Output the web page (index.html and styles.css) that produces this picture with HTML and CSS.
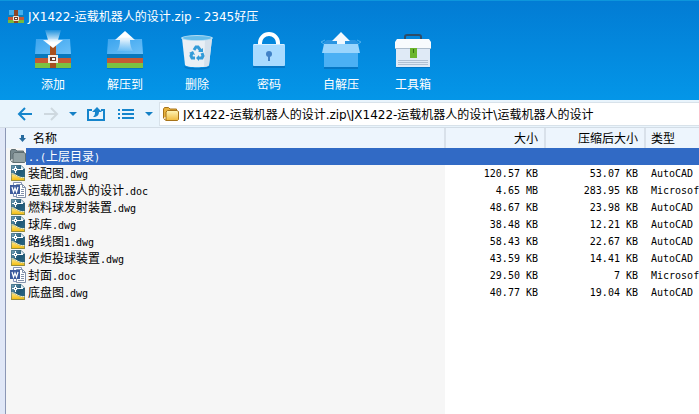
FILE: index.html
```html
<!DOCTYPE html>
<html lang="zh-CN">
<head>
  <meta charset="UTF-8" />
  <meta name="viewport" content="width=device-width, initial-scale=1.0"/>
  <title>JX1422-运载机器人的设计.zip - 2345好压</title>
  <link rel="stylesheet" href="styles.css">
</head>
<body>
  <!-- shared icons -->
  <svg class="sprite" aria-hidden="true">
    <defs>
      <linearGradient id="down" x1="0" y1="0" x2="0" y2="1">
        <stop offset="0" stop-color="#fff" stop-opacity="0.1"/>
        <stop offset="0.7" stop-color="#fff"/>
      </linearGradient>
      <linearGradient id="up" x1="0" y1="0" x2="0" y2="1">
        <stop offset="0.3" stop-color="#fff"/>
        <stop offset="1" stop-color="#fff" stop-opacity="0.1"/>
      </linearGradient>
      <linearGradient id="sky" x1="0" y1="0" x2="1" y2="1">
        <stop offset="0" stop-color="#3ba4ee"/>
        <stop offset="1" stop-color="#6cc0f8"/>
      </linearGradient>
      <linearGradient id="gold" x1="0" y1="0" x2="0" y2="1">
        <stop offset="0" stop-color="#fff6b8"/>
        <stop offset="1" stop-color="#f0b93c"/>
      </linearGradient>
      <linearGradient id="yellow" x1="0" y1="0" x2="0" y2="1">
        <stop offset="0" stop-color="#fbe58a"/>
        <stop offset="1" stop-color="#f5b800"/>
      </linearGradient>
      <linearGradient id="teal" x1="0" y1="0" x2="1" y2="1">
        <stop offset="0" stop-color="#7fa9bf"/>
        <stop offset="0.5" stop-color="#1d5675"/>
        <stop offset="1" stop-color="#2f6d8a"/>
      </linearGradient>
    </defs>
    <symbol id="box" viewBox="0 0 40 40">
      <path d="M2 37h36v2H2z" fill="#0560a8" opacity="0.5"/>
      <path d="M3 9h34l1 15H2z" fill="url(#sky)"/>
      <path d="M2 24h36v4H2z" fill="#0878bd"/>
      <path d="M2 28h36v5H2z" fill="#c65a35"/>
      <path d="M2 33h36v5H2z" fill="#7cc242"/>
    </symbol>
    <symbol id="dwg" viewBox="0 0 16 16">
      <path d="M1 0h10l4 4v12H1z" fill="url(#teal)"/>
      <path d="M1 9c5 0 7 5 14 4v3H1z" fill="url(#yellow)"/>
      <path d="M1 8.500c5 0 7 5 14 4" fill="none" stroke="#fff3bb"/>
      <path d="M11 0v4h4z" fill="#e3eef4"/>
      <path d="M5.500 1v2M5.500 6v2M2 4.500h2M7 4.500h6" stroke="#fff" fill="none"/>
      <rect x="4.500" y="3.500" width="2" height="2" fill="#1d5675" stroke="#fff"/>
      <path d="M1.500 15.500V.5H11l3.500 3.500v11.500z" fill="none" stroke="#34606f" stroke-opacity="0.5"/>
    </symbol>
    <symbol id="doc" viewBox="0 0 16 16">
      <path d="M3.500 .5h8v14h-8z" fill="#fff" stroke="#8292b8"/>
      <path d="M6.500 2.500h6l3 3v10h-9z" fill="#fff" stroke="#8190aa"/>
      <path d="M12.500 2.500v3h3M11 7.500h3M11 9.500h3M11 11.500h3M8 13.500h6" fill="none" stroke="#8190aa"/>
      <path d="M0 3h10v9H0z" fill="#3c5a9c"/>
      <path d="M2 5l1.500 5L5 6l1.500 4L8 5" fill="none" stroke="#fff" stroke-width="1.200"/>
    </symbol>
    <symbol id="caret" viewBox="0 0 8 4">
      <path d="M0 0h8L4 4z" fill="#1480c5"/>
    </symbol>
  </svg>

  <header class="top">
    <div class="titlebar">
      <svg class="logo" viewBox="0 0 16 16">
        <path d="M1 1h14v6H1z" fill="#41b0ef"/>
        <path d="M0 6h16v3H0z" fill="#0b7fba"/>
        <path d="M0 8h16v3H0z" fill="#c75836"/>
        <path d="M0 11h16v3H0z" fill="#79b93c"/>
        <path d="M6 1h4v13H6z" fill="#8c4627"/>
        <path d="M5.500 7.500h5v4h-5z" fill="#6b4030" stroke="#f5e7da"/>
        <path d="M7 9.500h2" stroke="#fff"/>
      </svg>
      <h1>JX1422-运载机器人的设计.zip - 2345好压</h1>
    </div>
    <div class="tools">
      <button type="button">
        <svg viewBox="0 0 40 40">
          <use href="#box"/>
          <path d="M17 14h6v24h-6z" fill="#a8501f"/>
          <path d="M16 26h8v6h-8z" fill="#6c3b28" stroke="#f7ebe4" stroke-width="2"/>
          <path d="M19 29h3" stroke="#fff" stroke-width="2"/>
          <path d="M12 0h16l-3 10h5L20 18 10 10h5z" fill="url(#down)"/>
        </svg>
        <span>添加</span>
      </button>
      <button type="button">
        <svg viewBox="0 0 40 40">
          <use href="#box"/>
          <path d="M20 1l10 9h-5c0 5 1 8 3 11H12c2-3 3-6 3-11h-5z" fill="url(#up)"/>
        </svg>
        <span>解压到</span>
      </button>
      <button type="button">
        <svg viewBox="0 0 40 40">
          <path d="M7 36c5 3 21 3 26 0l-1 2c-6 2-18 2-24 0z" fill="#0560a8" opacity="0.5"/>
          <path d="M5 8h30l-3 27c-1 3-23 3-24 0z" fill="#e9eff5"/>
          <path d="M28 9h7l-3 26c0 1-3 2-5 2z" fill="#d5e0eb"/>
          <ellipse cx="20" cy="8" rx="16" ry="3" fill="#b5dcf2"/>
          <ellipse cx="20" cy="8" rx="14" ry="2" fill="#65bdeb"/>
          <g fill="none" stroke="#329bd8" stroke-width="3">
            <path d="M17 20l2-3h2l3 4"/>
            <path d="M15 23l-1 3 1 2h3"/>
            <path d="M22 28h3l1-2-1-3"/>
          </g>
          <path d="M21 22h5v-4zM12 23l4-2 2 4zM22 25v6l-3-3z" fill="#329bd8"/>
        </svg>
        <span>删除</span>
      </button>
      <button type="button">
        <svg viewBox="0 0 40 40">
          <path d="M4 36h32v2H4z" fill="#0560a8" opacity="0.5"/>
          <path d="M11 16v-3a9 9 0 0 1 18 0v3" fill="none" stroke="#fff" stroke-width="4"/>
          <rect x="4" y="14" width="32" height="22" rx="1" fill="#a9dbff"/>
          <path d="M5 14.500h30" stroke="#d6eeff"/>
          <circle cx="20" cy="24" r="3" fill="#4182c7"/>
          <path d="M20 24v7" stroke="#4182c7" stroke-width="2"/>
        </svg>
        <span>密码</span>
      </button>
      <button type="button">
        <svg viewBox="0 0 40 40">
          <path d="M3 37h34v2H3z" fill="#0560a8" opacity="0.5"/>
          <path d="M3 12l3-2h28l3 2v4H3z" fill="#2a95e2"/>
          <path d="M20 2l9 9h-5v6h-8v-6h-5z" fill="#f1f8fe"/>
          <path d="M3 20h34v17H3z" fill="#4bb0f4"/>
          <path d="M3 14h34l2 9H1z" fill="#9ad5fd"/>
          <path d="M3 14L0 12l4-2M37 14l3-2-4-2" fill="none" stroke="#4fb1ee"/>
        </svg>
        <span>自解压</span>
      </button>
      <button type="button">
        <svg viewBox="0 0 40 40">
          <path d="M3 36h34v2H3z" fill="#0560a8" opacity="0.5"/>
          <path d="M12 10V7q0-2 2-2h12q2 0 2 2v3" fill="none" stroke="#2e4d68" stroke-width="2"/>
          <path d="M3 17h34v20H3z" fill="#dfeaf6"/>
          <path d="M4 9h32l2 3v6H2v-6z" fill="#f8fbfd"/>
          <path d="M2 18.500h36" stroke="#aebdcc"/>
          <path d="M5 30.500h30M5 32.500h30M5 34.500h30" stroke="#b1c0d2"/>
          <path d="M17 18h7v10h-7z" fill="#6ab52d"/>
          <path d="M20.500 19v4" stroke="#356f13"/>
        </svg>
        <span>工具箱</span>
      </button>
    </div>
  </header>

  <nav class="navbar">
    <button type="button" class="arrow" aria-label="后退">
      <svg viewBox="0 0 16 14"><path d="M8 1L2 7l6 6M2 7h13" fill="none" stroke="#1585cc" stroke-width="2"/></svg>
    </button>
    <button type="button" class="arrow" aria-label="前进" disabled>
      <svg viewBox="0 0 16 14"><path d="M8 1l6 6-6 6M14 7H1" fill="none" stroke="#ced8df" stroke-width="2"/></svg>
    </button>
    <button type="button" class="drop" aria-label="历史记录"><svg viewBox="0 0 8 4"><use href="#caret"/></svg></button>
    <button type="button" class="share" aria-label="向上">
      <svg viewBox="0 0 18 14">
        <path d="M5 3H1v10h16V3h-3" fill="none" stroke="#1585cc" stroke-width="2"/>
        <path d="M10 0l5 5h-3c0 3-2 5-6 5 2-2 2-3 2-5H5z" fill="#1585cc"/>
      </svg>
    </button>
    <button type="button" class="view" aria-label="查看">
      <svg viewBox="0 0 16 14"><path d="M0 3h2m2 0h12M0 7h2m2 0h12M0 11h2m2 0h12" fill="none" stroke="#1585cc" stroke-width="2"/></svg>
    </button>
    <button type="button" class="drop" aria-label="查看方式"><svg viewBox="0 0 8 4"><use href="#caret"/></svg></button>
    <label class="address">
      <svg viewBox="0 0 16 14">
        <path d="M.5 11V2l1-1.500h4L7 2h6.500v2" fill="#e8b23c" stroke="#a67319"/>
        <path d="M.5 11.500L3 13.500h11.500l1-1V4.500L14 3.500H4.500L3 5v8" fill="url(#gold)" stroke="#a67319"/>
      </svg>
      <input type="text" aria-label="路径" value="JX1422-运载机器人的设计.zip\JX1422-运载机器人的设计\运载机器人的设计">
    </label>
  </nav>

  <main class="files">
    <table>
      <colgroup>
        <col class="col-name">
        <col class="col-size">
        <col class="col-size">
        <col>
      </colgroup>
      <thead>
        <tr>
          <th class="sort"><svg viewBox="0 0 8 8"><path d="M3 0h3v3h2L4.500 7 1 3h2z" fill="#276b9f"/></svg>名称</th>
          <th class="num">大小</th>
          <th class="num">压缩后大小</th>
          <th>类型</th>
        </tr>
      </thead>
      <tbody>
        <tr class="selected">
          <td>
            <div class="name">
              <svg viewBox="0 0 16 16">
                <path d="M.5 12V3l1-1.500h4L7 3h6.500v2" fill="#77888d" stroke="#5e6d70"/>
                <path d="M.5 12.500L3 14.500h11.500l1-1V5.500L14 4.500H4.500L3 6v8" fill="#93a2a4" stroke="#5e6d70"/>
              </svg>
              <span><i>..(</i>上层目录<i>)</i></span>
            </div>
          </td>
          <td></td>
          <td></td>
          <td></td>
        </tr>
        <tr>
          <td><div class="name"><svg><use href="#dwg"/></svg><span>装配图<i>.dwg</i></span></div></td>
          <td class="num">120.57 KB</td>
          <td class="num">53.07 KB</td>
          <td>AutoCAD</td>
        </tr>
        <tr>
          <td><div class="name"><svg><use href="#doc"/></svg><span>运载机器人的设计<i>.doc</i></span></div></td>
          <td class="num">4.65 MB</td>
          <td class="num">283.95 KB</td>
          <td>Microsoft</td>
        </tr>
        <tr>
          <td><div class="name"><svg><use href="#dwg"/></svg><span>燃料球发射装置<i>.dwg</i></span></div></td>
          <td class="num">48.67 KB</td>
          <td class="num">23.98 KB</td>
          <td>AutoCAD</td>
        </tr>
        <tr>
          <td><div class="name"><svg><use href="#dwg"/></svg><span>球库<i>.dwg</i></span></div></td>
          <td class="num">38.48 KB</td>
          <td class="num">12.21 KB</td>
          <td>AutoCAD</td>
        </tr>
        <tr>
          <td><div class="name"><svg><use href="#dwg"/></svg><span>路线图<i>1.dwg</i></span></div></td>
          <td class="num">58.43 KB</td>
          <td class="num">22.67 KB</td>
          <td>AutoCAD</td>
        </tr>
        <tr>
          <td><div class="name"><svg><use href="#dwg"/></svg><span>火炬投球装置<i>.dwg</i></span></div></td>
          <td class="num">43.59 KB</td>
          <td class="num">14.41 KB</td>
          <td>AutoCAD</td>
        </tr>
        <tr>
          <td><div class="name"><svg><use href="#doc"/></svg><span>封面<i>.doc</i></span></div></td>
          <td class="num">29.50 KB</td>
          <td class="num">7 KB</td>
          <td>Microsoft</td>
        </tr>
        <tr>
          <td><div class="name"><svg><use href="#dwg"/></svg><span>底盘图<i>.dwg</i></span></div></td>
          <td class="num">40.77 KB</td>
          <td class="num">19.04 KB</td>
          <td>AutoCAD</td>
        </tr>
      </tbody>
    </table>
  </main>
</body>
</html>
```

FILE: styles.css
```css
* {
  box-sizing: border-box;
}

html, body {
  height: 100%;
  margin: 0;
}

body {
  display: flex;
  flex-direction: column;
  overflow: hidden;
  font-family: "Noto Sans CJK SC", sans-serif;
  font-size: 12px;
  color: #000;
  background-color: #fff;
}

svg {
  display: block;
  flex: none;
}

button {
  padding: 0;
  border: none;
  background: none;
  font: inherit;
  cursor: pointer;
}

.sprite {
  position: absolute;
  width: 0;
  height: 0;
}

/* blue header */
.top {
  flex: none;
  height: 100px;
  padding-top: 7px;
  border-top: 1px solid #0d96dc;
  background-image: linear-gradient(#027cd4, #0496e8);
  color: #fff;
}

.titlebar {
  display: flex;
  align-items: center;
  gap: 4px;
  height: 18px;
  padding-left: 8px;
}

.logo {
  width: 16px;
  height: 16px;
}

h1 {
  margin: 0;
  font-family: "DejaVu Sans", "Noto Sans CJK SC", sans-serif;
  font-size: 12px;
  font-weight: normal;
  line-height: 18px;
  white-space: nowrap;
}

.tools {
  display: flex;
  padding: 4px 0 0 17px;
}

.tools button {
  display: flex;
  flex-direction: column;
  align-items: center;
  gap: 5px;
  width: 72px;
  color: #fff;
  line-height: 18px;
}

.tools svg {
  width: 40px;
  height: 40px;
}

/* navigation row */
.navbar {
  display: flex;
  flex: none;
  align-items: center;
  height: 28px;
  padding-left: 17px;
  border-bottom: 1px solid #d3dde6;
  background-color: #e9f4fc;
}

.arrow svg {
  width: 16px;
  height: 14px;
}

.arrow {
  margin-right: 10px;
}

.drop svg {
  width: 8px;
  height: 4px;
}

.drop {
  margin-right: 6px;
}

.share svg {
  width: 18px;
  height: 14px;
}

.share {
  margin: 0 13px 0 4px;
}

.view svg {
  width: 16px;
  height: 14px;
}

.view {
  margin-right: 11px;
}

.address {
  display: flex;
  flex: 1;
  align-items: center;
  gap: 4px;
  height: 24px;
  padding-left: 3px;
  border: 1px solid #d8e2ea;
  border-right: none;
  background-color: #fff;
}

.address svg {
  width: 16px;
  height: 14px;
}

.address input {
  flex: 1;
  min-width: 0;
  padding: 0;
  border: none;
  outline: none;
  font-family: "DejaVu Sans", "Noto Sans CJK SC", sans-serif;
  font-size: 12px;
  color: #000;
}

/* file list */
.files {
  flex: 1;
  overflow: hidden;
  border-left: 5px solid #e0e7f7;
  background-image: linear-gradient(to right, #8c97b5 1px, #f6f6f6 1px, #f6f6f6 440px, #fff 440px);
  padding-left: 1px;
}

table {
  width: 100%;
  table-layout: fixed;
  border-collapse: separate;
  border-spacing: 0;
}

.col-name {
  width: 440px;
}

.col-size {
  width: 100px;
}

th {
  height: 20px;
  padding: 0 6px 0 5px;
  border-right: 2px solid #d9e1ea;
  background-color: #edf5fd;
  font-weight: normal;
  line-height: 18px;
  text-align: left;
  white-space: nowrap;
}

th:last-child {
  border-right: none;
}

.sort {
  padding-left: 12px;
}

.sort svg {
  display: inline-block;
  width: 8px;
  height: 8px;
  margin-right: 7px;
}

td {
  height: 17px;
  padding: 0 8px 0 5px;
  overflow: hidden;
  font-family: "DejaVu Sans Mono", monospace;
  font-size: 10px;
  line-height: 17px;
  white-space: nowrap;
}

td:first-child {
  padding: 0;
  font-family: "Noto Sans CJK SC", sans-serif;
  font-size: 12px;
}

.num {
  text-align: right;
}

.name {
  display: flex;
  height: 17px;
  line-height: 15px;
}

.name svg {
  width: 16px;
  height: 16px;
  margin-left: 4px;
}

.name span {
  flex: 1;
  padding-left: 2px;
}

.name i {
  font-family: "DejaVu Sans Mono", monospace;
  font-size: 10px;
  font-style: normal;
}

.selected td {
  background-color: #316ac5;
  color: #fff;
}

.selected td:first-child {
  background-color: #f6f6f6;
}

.selected .name span {
  background-color: #316ac5;
}
```
